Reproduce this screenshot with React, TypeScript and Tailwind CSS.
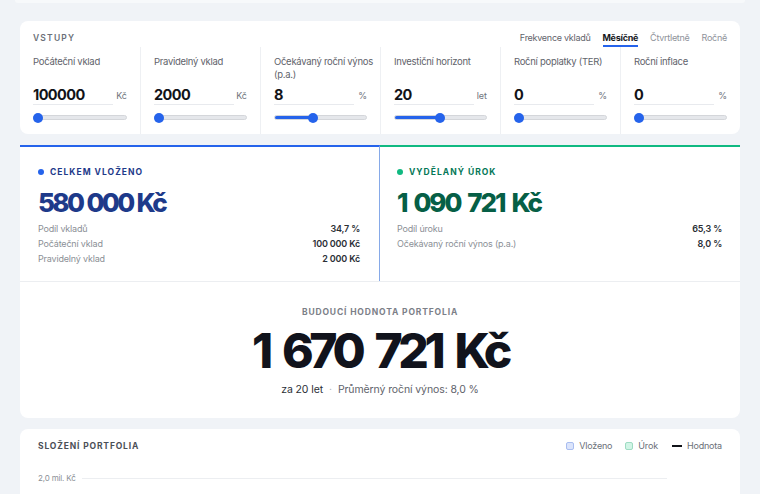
import React from "react";

const cols = [
  { l1: "Počáteční vklad", l2: "", value: "100000", unit: "Kč", pct: 0 },
  { l1: "Pravidelný vklad", l2: "", value: "2000", unit: "Kč", pct: 0 },
  { l1: "Očekávaný roční výnos", l2: "(p.a.)", value: "8", unit: "%", pct: 42 },
  { l1: "Investiční horizont", l2: "", value: "20", unit: "let", pct: 49 },
  { l1: "Roční poplatky (TER)", l2: "", value: "0", unit: "%", pct: 0 },
  { l1: "Roční inflace", l2: "", value: "0", unit: "%", pct: 0 },
];

function Slider({ pct }: { pct: number }) {
  return (
    <div className="relative mt-[8px] h-[9px] flex items-center">
      <div className="relative w-full h-[5px] rounded-full bg-[#e5e7eb] border border-[#d4d6da] overflow-hidden">
        <div className="absolute left-0 top-0 h-full bg-[#2563eb]" style={{ width: `${pct}%` }} />
      </div>
      <div
        className="absolute top-0 w-[10px] h-[10px] -mt-[0.5px] rounded-full bg-[#2563eb]"
        style={{ left: `calc(${pct}% - ${pct === 0 ? 0 : 5}px)` }}
      />
    </div>
  );
}

function Row({ label, value }: { label: string; value: string }) {
  return (
    <div className="flex justify-between items-center h-[15px] text-[9px] tracking-[-0.02em]">
      <span className="text-[#8b8f96]">{label}</span>
      <span className="font-semibold text-[#2b2f36]">{value}</span>
    </div>
  );
}

function Amount({ parts, className, gap }: { parts: string[]; className: string; gap: string }) {
  return (
    <div className={`inline-flex ${gap} ${className}`}>
      {parts.map((p, i) => (
        <span key={i}>{p}</span>
      ))}
    </div>
  );
}

export default function App() {
  return (
    <div className="min-h-[494px] bg-[#f0f3f7] font-['Inter',sans-serif] overflow-hidden">
      <div className="mx-[15px] h-[3px] bg-[#f7f9fb] rounded-b" />
      <div className="px-5 pt-[18px]">
        {/* Inputs */}
        <section className="bg-white rounded-lg h-[113px]">
          <div className="flex justify-between items-start h-[26px] pt-[11px] px-[13px]">
            <div className="text-[8.5px] leading-[12px] font-semibold tracking-[0.14em] text-[#6b7078]">VSTUPY</div>
            <div className="flex items-start gap-[12px] text-[9px] leading-[12px] tracking-[-0.03em]">
              <span className="text-[#5f636b]">Frekvence vkladů</span>
              <span className="font-bold text-[#16181d] pb-[1px] border-b-2 border-[#2563eb]">Měsíčně</span>
              <span className="text-[#8e929a]">Čtvrtletně</span>
              <span className="text-[#8e929a]">Ročně</span>
            </div>
          </div>
          <div className="grid grid-cols-6 h-[87px]">
            {cols.map((inp, i) => (
              <div
                key={inp.l1}
                className={`px-[13px] pt-[8px] ${i > 0 ? "border-l border-[#eef0f3]" : ""}`}
              >
                <div className="h-[26px] text-[9.5px] leading-[13px] text-[#5f636b] tracking-[-0.03em]">
                  <div className="whitespace-nowrap">{inp.l1}</div>
                  {inp.l2 && <div>{inp.l2}</div>}
                </div>
                <div className="mt-[4px] flex items-end">
                  <div className="w-[80px] border-b border-[#e8eaee] text-[14.5px] leading-[19px] font-bold text-[#111318] tracking-[-0.04em]">
                    {inp.value}
                  </div>
                  <div className="flex-1 text-right text-[9px] leading-[14px] text-[#70747c] pb-[2px]">{inp.unit}</div>
                </div>
                <Slider pct={inp.pct} />
              </div>
            ))}
          </div>
        </section>

        {/* Results */}
        <section className="mt-[11px] bg-white rounded-b-lg">
          <div className="grid grid-cols-2 h-[137px] border-b border-[#eceef1]">
            <div className="border-t-2 border-[#2563eb] border-r border-r-[#86a9e8] pl-[18px] pr-[19px] pt-[19px]">
              <div className="flex items-center gap-[6px] h-[12px]">
                <span className="w-[6px] h-[6px] rounded-full bg-[#2563eb]" />
                <span className="text-[8.5px] font-bold tracking-[0.12em] text-[#1e3a8a]">CELKEM VLOŽENO</span>
              </div>
              <div className="mt-[9px]">
                <Amount
                  parts={["580", "000", "Kč"]}
                  gap="gap-[4px]"
                  className="text-[26px] leading-[32px] font-extrabold tracking-[-0.1em] text-[#1e3a8a]"
                />
              </div>
              <div className="mt-[2px]">
                <Row label="Podíl vkladů" value="34,7 %" />
                <Row label="Počáteční vklad" value="100 000 Kč" />
                <Row label="Pravidelný vklad" value="2 000 Kč" />
              </div>
            </div>
            <div className="border-t-2 border-[#10b981] pl-[17px] pr-[18px] pt-[19px]">
              <div className="flex items-center gap-[6px] h-[12px]">
                <span className="w-[6px] h-[6px] rounded-full bg-[#10b981]" />
                <span className="text-[8.5px] font-bold tracking-[0.12em] text-[#047857]">VYDĚLANÝ ÚROK</span>
              </div>
              <div className="mt-[9px]">
                <Amount
                  parts={["1", "090", "721", "Kč"]}
                  gap="gap-[7px]"
                  className="text-[26px] leading-[32px] font-extrabold tracking-[-0.08em] text-[#065f46]"
                />
              </div>
              <div className="mt-[2px]">
                <Row label="Podíl úroku" value="65,3 %" />
                <Row label="Očekávaný roční výnos (p.a.)" value="8,0 %" />
              </div>
            </div>
          </div>
          <div className="h-[136px] flex flex-col items-center pt-[24px]">
            <div className="text-[8.5px] leading-[12px] font-bold tracking-[0.1em] text-[#7c8088]">BUDOUCÍ HODNOTA PORTFOLIA</div>
            <Amount
              parts={["1", "670", "721", "Kč"]}
              gap="gap-[13px]"
              className="mt-[3px] text-[48px] leading-[60px] font-extrabold tracking-[-0.09em] text-[#11131c]"
            />
            <div className="mt-[1px] text-[10.5px] leading-[16px] text-[#5f636b] flex items-center gap-[6px] tracking-[-0.01em]">
              <span className="text-[#2b2f36]">za 20 let</span>
              <span className="text-[#b0b4ba]">·</span>
              <span>Průměrný roční výnos: 8,0 %</span>
            </div>
          </div>
        </section>

        {/* Composition */}
        <section className="mt-[11px] bg-white rounded-t-lg h-[80px] px-[18px] pt-[11px]">
          <div className="flex justify-between items-center h-[12px]">
            <div className="text-[8.5px] font-bold tracking-[0.1em] text-[#4b4f57]">SLOŽENÍ PORTFOLIA</div>
            <div className="flex items-center text-[9px] text-[#6b7078] tracking-[-0.02em]">
              <span className="w-[8px] h-[8px] rounded-[2px] bg-[#dbe4fb] border border-[#a9bdf0] mr-[5px]" />
              <span className="mr-[13px]">Vloženo</span>
              <span className="w-[8px] h-[8px] rounded-[2px] bg-[#d1f5e6] border border-[#9fdcc3] mr-[5px]" />
              <span className="mr-[14px]">Úrok</span>
              <span className="w-[10px] h-[2px] bg-[#111318] mr-[5px]" />
              <span>Hodnota</span>
            </div>
          </div>
          <div className="mt-[20px] flex items-center gap-[6px]">
            <span className="text-[8px] text-[#8b8f96] whitespace-nowrap tracking-[-0.02em]">2,0 mil. Kč</span>
            <div className="w-[585px] h-px bg-[#eceef1]" />
          </div>
        </section>
      </div>
    </div>
  );
}
